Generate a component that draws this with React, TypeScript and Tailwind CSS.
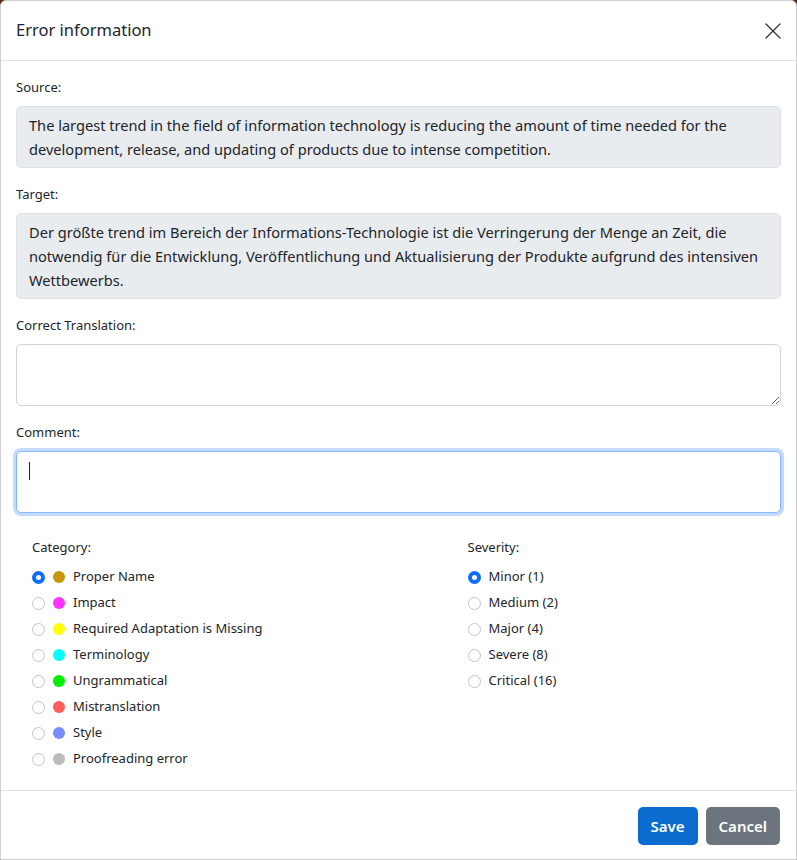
import { X } from 'lucide-react';

type Category = { label: string; color: string };

const categories: Category[] = [
  { label: 'Proper Name', color: 'bg-[#c8960c]' },
  { label: 'Impact', color: 'bg-[#ff33ff]' },
  { label: 'Required Adaptation is Missing', color: 'bg-[#ffff00]' },
  { label: 'Terminology', color: 'bg-[#00ffff]' },
  { label: 'Ungrammatical', color: 'bg-[#00ee00]' },
  { label: 'Mistranslation', color: 'bg-[#ff5c5c]' },
  { label: 'Style', color: 'bg-[#7b8cff]' },
  { label: 'Proofreading error', color: 'bg-[#bbbbbb]' },
];

const severities = ['Minor (1)', 'Medium (2)', 'Major (4)', 'Severe (8)', 'Critical (16)'];

function Radio({ checked }: { checked: boolean }) {
  return checked ? (
    <span className="box-border h-[13px] w-[13px] flex-shrink-0 rounded-full border-[4px] border-[#0d6efd] bg-white" />
  ) : (
    <span className="box-border h-[13px] w-[13px] flex-shrink-0 rounded-full border border-[#c4c4c4] bg-white" />
  );
}

export default function App() {
  return (
    <div className="h-[860px] w-[797px] overflow-hidden bg-[#5a2a20] font-['Noto_Sans',sans-serif] text-[#212529]">
      <div className="h-full w-full rounded-t-[6px] border border-[#d0d0d0] bg-white">
        <div className="flex h-[60px] items-center justify-between border-b border-[#dee2e6] pl-[15px] pr-[9px]">
          <h2 className="text-[16.5px] font-normal leading-none">Error information</h2>
          <X className="h-[28px] w-[28px] text-[#333]" strokeWidth={1.1} />
        </div>

        <div className="px-[15px] pt-[17px]">
          <p className="text-[13px] leading-[18px]">Source:</p>
          <div className="mt-[10px] rounded-[5px] border border-[#dee2e6] bg-[#e9ecef] px-[12px] py-[6px] text-[14.6px] leading-[24px]">
            The largest trend in the field of information technology is reducing the amount of time needed for the
            development, release, and updating of products due to intense competition.
          </div>

          <p className="mt-[17px] text-[13px] leading-[18px]">Target:</p>
          <div className="mt-[10px] rounded-[5px] border border-[#dee2e6] bg-[#e9ecef] px-[12px] py-[6px] text-[14.6px] leading-[24px]">
            Der größte trend im Bereich der Informations-Technologie ist die Verringerung der Menge an Zeit, die
            notwendig für die Entwicklung, Veröffentlichung und Aktualisierung der Produkte aufgrund des intensiven
            Wettbewerbs.
          </div>

          <p className="mt-[17px] text-[13px] leading-[18px]">Correct Translation:</p>
          <textarea className="mt-[10px] block h-[62px] w-full rounded-[5px] border border-[#ced4da] bg-white px-[12px] py-[6px] text-[15px] outline-none" />

          <p className="mt-[17px] text-[13px] leading-[18px]">Comment:</p>
          <div className="mt-[10px] flex h-[62px] w-full rounded-[5px] border border-[#86b7fe] bg-white px-[12px] py-[10px] shadow-[0_0_0_3px_rgba(13,110,253,0.25)]">
            <span className="h-[18px] w-px bg-[#222]" />
          </div>

          <div className="mt-[25px] grid grid-cols-2 pl-[16px]">
            <div>
              <p className="text-[13px] leading-[18px]">Category:</p>
              <div className="mt-[8px] flex flex-col">
                {categories.map((c, i) => (
                  <div key={c.label} className="flex h-[26px] items-center">
                    <Radio checked={i === 0} />
                    <span className={`ml-[8px] h-[12px] w-[12px] rounded-full ${c.color}`} />
                    <span className="ml-[8px] text-[13px]">{c.label}</span>
                  </div>
                ))}
              </div>
            </div>
            <div className="pl-[61px]">
              <p className="text-[13px] leading-[18px]">Severity:</p>
              <div className="mt-[8px] flex flex-col">
                {severities.map((s, i) => (
                  <div key={s} className="flex h-[26px] items-center">
                    <Radio checked={i === 0} />
                    <span className="ml-[8px] text-[13px]">{s}</span>
                  </div>
                ))}
              </div>
            </div>
          </div>
        </div>

        <div className="mt-[18px] flex justify-end gap-[8px] border-t border-[#dee2e6] px-[16px] pt-[16px]">
          <button className="h-[38px] rounded-[5px] bg-[#0a6ccf] px-[13px] text-[15px] font-semibold text-white">Save</button>
          <button className="h-[38px] rounded-[5px] bg-[#6c757d] px-[13px] text-[15px] font-semibold text-white">Cancel</button>
        </div>
      </div>
    </div>
  );
}
